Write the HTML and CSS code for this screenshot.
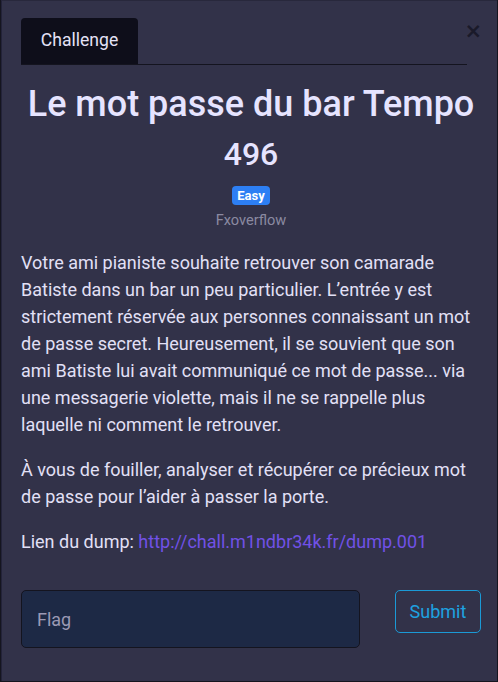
FILE: index.html
```html
<!DOCTYPE html>
<html lang="fr">
<head>
<meta charset="utf-8">
<link rel="stylesheet" href="styles.css">
</head>
<body>
<div class="modal">
  <button class="close" aria-label="Close">&times;</button>
  <div class="tabs">
    <div class="tab">Challenge</div>
  </div>
  <div class="content">
    <h1 class="title">Le mot passe du bar Tempo</h1>
    <div class="value">496</div>
    <div class="meta">
      <span class="badge">Easy</span>
      <span class="author">Fxoverflow</span>
    </div>
    <div class="desc">
      <p>Votre ami pianiste souhaite retrouver son camarade Batiste dans un bar un peu particulier. L’entrée y est strictement réservée aux personnes connaissant un mot de passe secret. Heureusement, il se souvient que son ami Batiste lui avait communiqué ce mot de passe... via une messagerie violette, mais il ne se rappelle plus laquelle ni comment le retrouver.</p>
      <p>À vous de fouiller, analyser et récupérer ce précieux mot de passe pour l’aider à passer la porte.</p>
      <p>Lien du dump: <a href="#">http://chall.m1ndbr34k.fr/dump.001</a></p>
    </div>
    <form class="flag-row">
      <input class="flag-input" type="text" placeholder="Flag">
      <button class="submit" type="button">Submit</button>
    </form>
  </div>
</div>
</body>
</html>
```

FILE: styles.css
```css
html, body {
  margin: 0;
  padding: 0;
  background: #15151f;
  height: 100%;
}
body {
  font-family: Roboto, "Liberation Sans", sans-serif;
}
.modal {
  position: relative;
  box-sizing: border-box;
  width: 496px;
  height: 681px;
  margin-left: 1px;
  background: #323249;
  border-left: 1px solid #23233a;
  border-top: 1px solid #28283c;
  padding: 17px 16px 0 19px;
}
.close {
  position: absolute;
  top: 20px;
  right: 15px;
  background: none;
  border: none;
  padding: 0;
  font-family: "DejaVu Sans", sans-serif;
  font-size: 21px;
  font-weight: 700;
  line-height: 1;
  color: #1a1a2a;
  cursor: pointer;
}
.tabs {
  display: flex;
  margin-right: 14px;
  border-bottom: 1px solid #14141f;
}
.tab {
  background: #0e0e1a;
  color: #e4e2f6;
  font-size: 17.6px;
  height: 46px;
  line-height: 45px;
  border-radius: 4px 4px 0 0;
  width: 117px;
  box-sizing: border-box;
  text-align: center;
}
.content {
  display: flex;
  flex-direction: column;
}
.title {
  margin: 17px 0 0;
  text-align: center;
  font-size: 36px;
  font-weight: 500;
  line-height: 44px;
  color: #e6e4ff;
}
.value {
  text-align: center;
  font-size: 32px;
  font-weight: 500;
  line-height: 40px;
  margin-top: 8px;
  color: #e6e4ff;
}
.meta {
  display: flex;
  flex-direction: column;
  align-items: center;
  margin-top: 12px;
}
.badge {
  background: #2d7ff4;
  color: #ffffff;
  font-size: 13px;
  font-weight: 700;
  line-height: 19px;
  padding: 0 5px;
  border-radius: 4px;
}
.author {
  color: #8b8aa1;
  font-size: 14.6px;
  line-height: 20px;
  margin-top: 5px;
}
.desc {
  margin-top: 19px;
  padding-right: 4px;
  color: #e2e0f6;
  font-size: 18px;
  line-height: 27px;
}
.desc p {
  margin: 0 0 18px;
}
.desc a {
  color: #7151e6;
  text-decoration: none;
}
.flag-row {
  display: flex;
  justify-content: space-between;
  align-items: flex-start;
  margin-top: 17px;
}
.flag-input {
  box-sizing: border-box;
  width: 339px;
  height: 58px;
  background: #1d2945;
  border: 1px solid #14141f;
  border-radius: 5px;
  padding: 0 15px;
  font-family: Roboto, "Liberation Sans", sans-serif;
  font-size: 18px;
  color: #e2e0f6;
  outline: none;
}
.flag-input::placeholder {
  color: #9b99b4;
}
.submit {
  box-sizing: border-box;
  width: 86px;
  height: 43px;
  background: transparent;
  border: 1px solid #1b9ad6;
  border-radius: 5px;
  color: #1ea2e0;
  font-family: Roboto, "Liberation Sans", sans-serif;
  font-size: 18px;
  padding: 0;
}
```
